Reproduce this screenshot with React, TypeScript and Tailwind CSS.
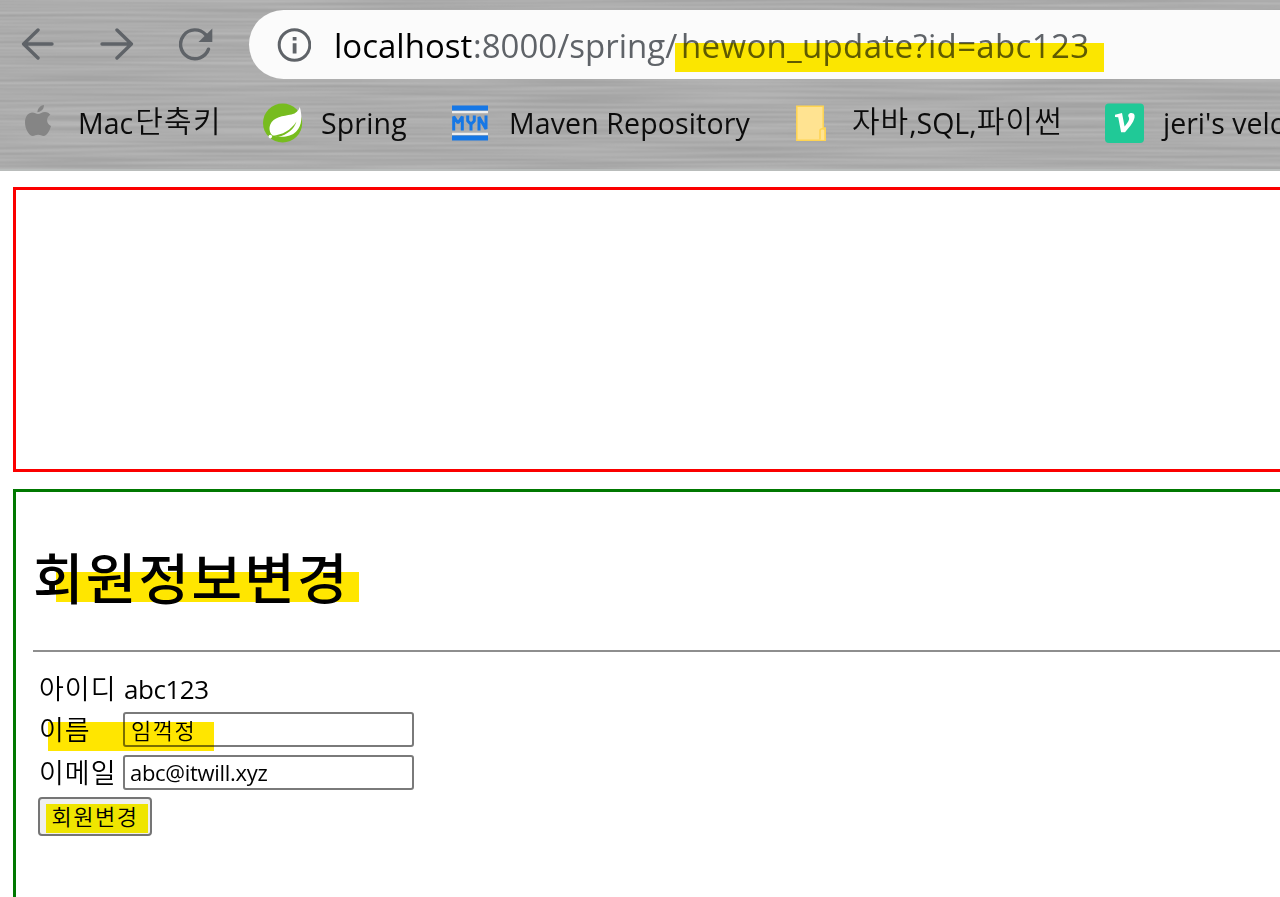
import type { ReactNode } from "react";

const FONT = "font-['Open_Sans','Noto_Sans_CJK_KR',sans-serif]";

function BackIcon() {
  return (
    <svg width="34" height="34" viewBox="0 0 34 34" fill="none" stroke="#5f6368" strokeWidth="3.4" strokeLinecap="round" strokeLinejoin="round">
      <path d="M31 16H3M17 2L2.600 16L17 30" />
    </svg>
  );
}

function ForwardIcon() {
  return (
    <svg width="34" height="34" viewBox="0 0 34 34" fill="none" stroke="#5f6368" strokeWidth="3.4" strokeLinecap="round" strokeLinejoin="round">
      <path d="M2 16H31M17 2L31.400 16L17 30" />
    </svg>
  );
}

function ReloadIcon() {
  return (
    <svg width="36" height="34" viewBox="0 0 36 34">
      <path d="M29.500 21.200A14.400 14.400 0 1 1 26.500 6.500" fill="none" stroke="#5f6368" strokeWidth="3.4" strokeLinecap="round" />
      <path d="M33.300 0.600V14H19.500Z" fill="#5f6368" />
    </svg>
  );
}

function InfoIcon() {
  return (
    <svg width="34" height="34" viewBox="0 0 34 34">
      <circle cx="17.500" cy="17" r="15.300" fill="none" stroke="#5f6368" strokeWidth="3" />
      <path d="M15.700 9H19.500V12.400H15.700ZM15.700 15.200H19.500V25.500H15.700Z" fill="#5f6368" />
    </svg>
  );
}

function AppleIcon() {
  return (
    <svg className="-mt-1" width="26" height="32" viewBox="0 0 26 32" fill="#858585">
      <path d="M13 9C15 9 17 7 20 7C22.400 7 24.300 8.300 25.300 9.800C20.600 12.600 21.300 19 26 21C25 25 21.800 31 18.600 31C16.500 31 15.600 29.800 13.200 29.800C10.800 29.800 9.800 31 7.800 31C4.300 31 0 24 0 17.400C0 11 3.600 7.400 7.300 7.400C9.800 7.400 11.400 9 13 9Z" />
      <path d="M12.400 7.200C12.300 3.700 15.400 0.400 18.900 0C19.200 3.700 16 7.100 12.400 7.200Z" />
    </svg>
  );
}

function SpringIcon() {
  return (
    <svg width="40" height="40" viewBox="0 0 40 40">
      <circle cx="19.600" cy="20" r="19.600" fill="#77bc1f" />
      <path d="M36.800 4C35.500 8 33 10.400 28.500 11.400C20 13 10.300 13.800 7.300 21.500C5.500 26 7 30.300 9.600 32.400C17 34.500 27.500 34.600 33.200 28.500C39.500 22 39.200 12.500 36.800 4Z" fill="#fff" />
      <path d="M9.300 33C20 31.500 27.500 27.500 33.500 18.500C31 26.500 24.500 31.500 15 34Z" fill="#77bc1f" />
      <circle cx="7.300" cy="33.600" r="1.800" fill="#fff" />
    </svg>
  );
}

function MavenIcon() {
  return (
    <svg width="36" height="36" viewBox="0 0 36 36">
      <path d="M0 0.500H36V5.500H0ZM0 30.500H36V35.500H0Z" fill="#1677e5" />
      <path d="M0 6H36V8.300H0ZM0 27.700H36V30H0Z" fill="#eee" />
      <path d="M1.700 25.500V11.500L6 18L10.300 11.500V25.500M15.700 10.500V16L19 19.200L22.300 16V10.500M19 19V25.500M27 25.500V12L34 24V10.500" fill="none" stroke="#1677e5" strokeWidth="3" strokeLinejoin="bevel" />
    </svg>
  );
}

function FolderIcon() {
  return (
    <svg width="30" height="36" viewBox="0 0 30 36" fill="#ffe391" stroke="#ffd451" strokeWidth="1.500">
      <path d="M0.800 1.300H27.200V23H29.200V35.200H0.800Z" />
      <path d="M24 34.500V25.500C24 23 29 23 29 25.500V35" />
    </svg>
  );
}

function VelogIcon() {
  return (
    <svg width="40" height="40" viewBox="0 0 40 40">
      <rect y="0.500" width="39" height="39.500" rx="4" fill="#20c997" />
      <path d="M10 11.700L17 10L19.600 23.400C22.800 19.500 24.600 16.800 24.100 15C23.800 13.900 22.800 13.200 23.400 11.700C24.200 9.500 29.200 9.300 29.600 12.600C30.100 17.500 25.200 23.500 20 29.300H16.100L13.200 14.300L10 13.900Z" fill="#fff" />
    </svg>
  );
}

function BrushedMetal() {
  return (
    <svg className="absolute inset-0" width="1280" height="171">
      <filter id="brushed" x="0" y="0" width="100%" height="100%" colorInterpolationFilters="sRGB">
        <feTurbulence type="fractalNoise" baseFrequency="0.006 0.34" numOctaves="1" seed="8" />
        <feColorMatrix values="0.14 0 0 0 0.605  0.14 0 0 0 0.605  0.14 0 0 0 0.605  0 0 0 0 1" />
      </filter>
      <rect width="1280" height="171" filter="url(#brushed)" />
    </svg>
  );
}

function Bookmark({ icon, className, children }: { icon: ReactNode; className: string; children: ReactNode }) {
  return (
    <div className={`flex shrink-0 items-center text-[28.500px] leading-[40px] text-[#0c0c0c] ${className}`}>
      {icon}
      {children}
    </div>
  );
}

export default function App() {
  return (
    <div className={`h-[897px] w-[1280px] overflow-hidden bg-white text-black ${FONT}`}>
      <header className="relative h-[171px] overflow-hidden border-b-2 border-[#b9bcbb] bg-[#acacac]">
        <BrushedMetal />
        <div className="relative flex h-[79px] items-center pt-2.5 pl-[21px]">
          <div className="flex w-[228px] gap-[45px]">
            <BackIcon />
            <ForwardIcon />
            <ReloadIcon />
          </div>
          <div className="flex h-[69px] flex-1 items-center rounded-l-full bg-[#fbfbfb] pl-7">
            <InfoIcon />
            <div className="mt-0.5 ml-[23px] flex whitespace-nowrap text-[33px] leading-[44px] text-[#5f6368]">
              <span className="w-[139px] text-black">localhost</span>
              <span className="w-[208px]">:8000/spring/</span>
              <span className="relative tracking-[0.35px]">
                hewon_update?id=abc123
                <span className="absolute top-[19px] -left-1.5 h-[29px] w-[429px] bg-[#ffea00] mix-blend-multiply" />
              </span>
            </div>
          </div>
        </div>
        <nav className="relative flex h-[88px] items-center whitespace-nowrap pl-[25px]">
          <Bookmark className="w-[238px] gap-[27px]" icon={<AppleIcon />}>
            <span>
              Mac<span className="relative -top-0.5 ml-0.5 text-[30px] font-[350] tracking-[1.300px]">단축키</span>
            </span>
          </Bookmark>
          <Bookmark className="w-[189px] gap-[18px]" icon={<SpringIcon />}>
            <span className="tracking-[0.150px]">Spring</span>
          </Bookmark>
          <Bookmark className="w-[344px] gap-[21px]" icon={<MavenIcon />}>
            <span className="tracking-[0.130px]">Maven Repository</span>
          </Bookmark>
          <Bookmark className="w-[309px] gap-[26px]" icon={<FolderIcon />}>
            <span>
              <span className="relative -top-0.5 text-[30px] font-[350] tracking-[1px]">자바</span>,SQL,
              <span className="relative -top-0.5 text-[30px] font-[350] tracking-[1.200px]">파이썬</span>
            </span>
          </Bookmark>
          <Bookmark className="gap-[18px]" icon={<VelogIcon />}>
            <span>jeri's velo</span>
          </Bookmark>
        </nav>
      </header>

      <main className="flex flex-col gap-[17px] pt-4 pl-[13px]">
        <section className="h-[285px] border-y-3 border-l-3 border-[#fb0000]" />
        <section className="h-[420px] border-t-3 border-l-3 border-[#007800] pl-[17px]">
          <h1 className="relative mt-[46px] h-[80px] text-[55px] leading-[80px] font-medium tracking-[2.200px]">
            <span>회원정보변경</span>
            <span className="absolute top-[34px] left-[23px] h-[30px] w-[303px] bg-[#ffe600] mix-blend-multiply" />
          </h1>
          <hr className="mt-8 border-t-2 border-[#8e8e8e]" />
          <form className="mt-[17px] ml-1.5 text-[27px] font-[350]">
            <div className="flex h-10 items-center">
              <label className="w-[85px] tracking-[1px]">아이디</label>
              <span className="text-[26px] font-normal tracking-[-0.450px]">abc123</span>
            </div>
            <div className="relative flex h-[42px] items-center">
              <label className="w-[84px] tracking-[1px]">이름</label>
              <input className="relative -top-px h-[35px] w-[291px] rounded-[3px] border-2 border-[#7a7a7a] pl-1.5 text-[22px] font-[350] tracking-[1.500px]" defaultValue="임꺽정" />
              <span className="absolute top-[13px] left-[9px] h-[29px] w-[166px] bg-[#ffe600] mix-blend-multiply" />
            </div>
            <div className="flex h-[44px] items-center">
              <label className="w-[84px] tracking-[1px]">이메일</label>
              <input className="relative -top-px h-[35px] w-[291px] rounded-[3px] border-2 border-[#7a7a7a] pl-[5px] text-[22px] font-normal tracking-[-0.300px]" defaultValue="abc@itwill.xyz" />
            </div>
            <button type="button" className="relative -ml-px mt-0.5 flex h-[39px] w-[114px] items-center justify-center rounded-[4px] border-2 border-[#757575] bg-[#efefef] text-[22px] font-[350]">
              <span className="tracking-[1.500px]">회원변경</span>
              <span className="absolute top-[5px] left-1.5 h-[29px] w-[102px] bg-[#fff500] mix-blend-multiply" />
            </button>
          </form>
        </section>
      </main>
    </div>
  );
}
